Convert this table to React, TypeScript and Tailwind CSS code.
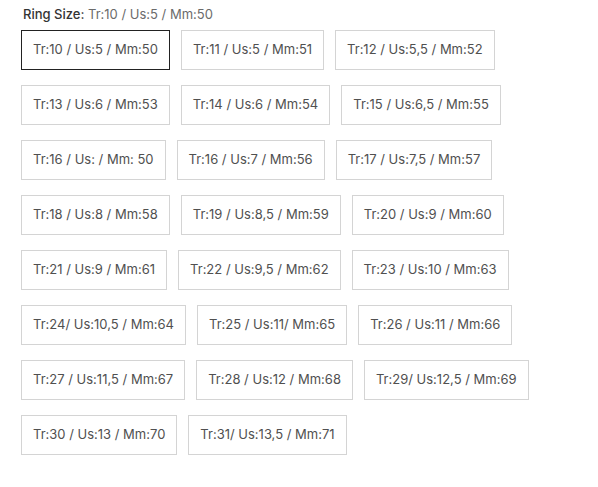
import { useState } from "react";

const SIZES = [
  "Tr:10 / Us:5 / Mm:50",
  "Tr:11 / Us:5 / Mm:51",
  "Tr:12 / Us:5,5 / Mm:52",
  "Tr:13 / Us:6 / Mm:53",
  "Tr:14 / Us:6 / Mm:54",
  "Tr:15 / Us:6,5 / Mm:55",
  "Tr:16 / Us: / Mm: 50",
  "Tr:16 / Us:7 / Mm:56",
  "Tr:17 / Us:7,5 / Mm:57",
  "Tr:18 / Us:8 / Mm:58",
  "Tr:19 / Us:8,5 / Mm:59",
  "Tr:20 / Us:9 / Mm:60",
  "Tr:21 / Us:9 / Mm:61",
  "Tr:22 / Us:9,5 / Mm:62",
  "Tr:23 / Us:10 / Mm:63",
  "Tr:24/ Us:10,5 / Mm:64",
  "Tr:25 / Us:11/ Mm:65",
  "Tr:26 / Us:11 / Mm:66",
  "Tr:27 / Us:11,5 / Mm:67",
  "Tr:28 / Us:12 / Mm:68",
  "Tr:29/ Us:12,5 / Mm:69",
  "Tr:30 / Us:13 / Mm:70",
  "Tr:31/ Us:13,5 / Mm:71",
];

// rows as laid out in the shop page (3 per row, last row 2)
const ROWS: string[][] = [];
for (let i = 0; i < SIZES.length; i += 3) ROWS.push(SIZES.slice(i, i + 3));

export default function App() {
  const [selected, setSelected] = useState(SIZES[0]);

  return (
    <div className="min-h-screen bg-white px-[21px] pt-[6px] font-['Inter',sans-serif]">
      {/* -------------------- LABEL -------------------- */}
      <div className="text-[13px] leading-[16px] mb-[8px] pl-[2px]">
        <span className="text-[#333] font-medium">Ring Size:</span>{" "}
        <span className="text-[#6b6b6b]">{selected}</span>
      </div>

      {/* -------------------- OPTIONS -------------------- */}
      <div className="flex flex-col gap-[15px]">
        {ROWS.map((row, r) => (
          <div key={r} className="flex gap-[11px]">
            {row.map((s) => (
              <button
                key={s}
                onClick={() => setSelected(s)}
                className={`h-[40px] px-[11px] border text-[13px] text-[#505050] whitespace-nowrap bg-white ${
                  selected === s ? "border-[#222]" : "border-[#d4d4d4]"
                }`}
              >
                {s}
              </button>
            ))}
          </div>
        ))}
      </div>
    </div>
  );
}
